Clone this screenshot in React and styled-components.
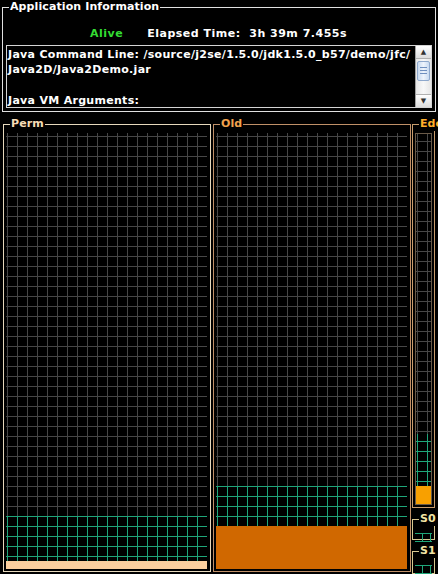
import React from "react";
import styled, { createGlobalStyle } from "styled-components";

const GlobalStyle = createGlobalStyle`
  html, body {
    margin: 0;
    padding: 0;
    background: #000;
  }
  body {
    font-family: "DejaVu Sans", "Liberation Sans", sans-serif;
    font-size: 11px;
    font-weight: bold;
    color: #fff;
  }
`;

const gridLines = (color) => `
  background-image:
    linear-gradient(to right, ${color} 1px, transparent 1px),
    linear-gradient(to top, transparent 2px, ${color} 2px, ${color} 3px, transparent 3px);
  background-size: 10px 10px;
  background-position: 1px 0, 0 100%;
`;

const Page = styled.div`
  width: 438px;
  height: 574px;
  overflow: hidden;
  display: flex;
  flex-direction: column;
  background: #000;
`;

const Group = styled.fieldset`
  box-sizing: border-box;
  margin: 0;
  padding: 0;
  min-width: 0;
  border: 1px solid ${(p) => p.$line};
  display: flex;
  flex-direction: column;
`;

const Legend = styled.legend`
  margin-left: 4px;
  padding: 0 1px;
  line-height: 14px;
  font-size: 11px;
  letter-spacing: 0.1px;
  white-space: nowrap;
  color: ${(p) => p.$color};
`;

const InfoGroup = styled(Group)`
  width: 434px;
  margin: 0 2px;
  padding: 0 3px 3px 2px;
`;

const StatusRow = styled.div`
  display: flex;
  justify-content: center;
  gap: 24px;
  padding: 13px 0 4px 0;
  line-height: 14px;
  letter-spacing: 0.5px;
`;

const Alive = styled.span`
  color: #33dd33;
`;

const Elapsed = styled.span`
  white-space: pre;
`;

const TextArea = styled.div`
  box-sizing: border-box;
  height: 63px;
  margin-left: 1px;
  border: 1px solid #d4d4d4;
  display: flex;
`;

const TextBody = styled.div`
  flex: 1;
  padding: 1px 1px;
  line-height: 15.3px;
  font-size: 11px;
  letter-spacing: 0.3px;
  white-space: pre;
  overflow: hidden;
`;

const ScrollBar = styled.div`
  width: 15px;
  display: flex;
  flex-direction: column;
  background: linear-gradient(to right, #e6e6e6, #f8f8f8 50%, #e6e6e6);
  border-left: 1px solid #a0a0a0;
`;

const ArrowBtn = styled.div`
  height: 12px;
  display: flex;
  align-items: center;
  justify-content: center;
  font-size: 7px;
  color: #333;
  background: linear-gradient(to bottom, #ffffff, #dcdcdc);
  border-${(p) => (p.$down ? "top" : "bottom")}: 1px solid #b0b0b0;
`;

const Thumb = styled.div`
  height: 18px;
  margin: 2px 1px 0;
  border: 1px solid #8ea8cc;
  border-radius: 2px;
  background:
    linear-gradient(#6f8fbf, #6f8fbf) center 5px / 7px 1px no-repeat,
    linear-gradient(#6f8fbf, #6f8fbf) center 8px / 7px 1px no-repeat,
    linear-gradient(#6f8fbf, #6f8fbf) center 11px / 7px 1px no-repeat,
    linear-gradient(to right, #c8daf0, #eef4fc 50%, #c8daf0);
`;

const Track = styled.div`
  flex: 1;
`;

const Pools = styled.div`
  flex: 1;
  display: flex;
  margin-top: 5px;
  min-height: 0;
`;

const PoolGroup = styled(Group)`
  width: ${(p) => p.$w}px;
  margin: 0 0 2px ${(p) => p.$ml}px;
  padding: 2px 3px 2px 2px;
`;

const SideColumn = styled.div`
  display: flex;
  flex-direction: column;
  gap: 4px;
  margin-left: 1px;
`;

const SmallGroup = styled(Group)`
  width: 23px;
  height: ${(p) => p.$h}px;
  padding: 2px 2px 2px 2px;
  flex: ${(p) => (p.$grow ? 1 : "none")};
`;

const Chart = styled.div`
  flex: 1;
  display: flex;
  flex-direction: column;
  justify-content: flex-end;
  background-color: #000;
  ${gridLines("#474747")}
  border: ${(p) => (p.$boxed ? "1px solid #6a5a48" : "none")};
`;

const Committed = styled.div`
  display: flex;
  flex-direction: column;
  justify-content: flex-end;
  ${gridLines("#1fa67a")}
`;

const Used = styled.div`
  background: ${(p) => p.$color};
`;

const MiniChart = styled.div`
  margin-top: 5px;
  height: 7px;
  border-top: 1px solid #1fa67a;
  border-bottom: 1px solid #1fa67a;
  background-image: linear-gradient(to right, #1fa67a 1px, transparent 1px);
  background-size: 8px 100%;
  background-position: 7px 0;
`;

const MemoryChart = ({ committed, used, color, boxed }) => (
  <Chart $boxed={boxed}>
    <Committed style={{ height: committed }}>
      <Used $color={color} style={{ height: used }} />
    </Committed>
  </Chart>
);

const App = () => {
  return (
    <Page>
      <GlobalStyle />
      <InfoGroup $line="#e0e0e0">
        <Legend $color="#ffffff">Application Information</Legend>
        <StatusRow>
          <Alive>Alive</Alive>
          <Elapsed>Elapsed Time:  3h 39m 7.455s</Elapsed>
        </StatusRow>
        <TextArea>
          <TextBody>
            {"Java Command Line: /source/j2se/1.5.0/jdk1.5.0_b57/demo/jfc/\nJava2D/Java2Demo.jar\n\nJava VM Arguments:"}
          </TextBody>
          <ScrollBar>
            <ArrowBtn>▲</ArrowBtn>
            <Thumb />
            <Track />
            <ArrowBtn $down>▼</ArrowBtn>
          </ScrollBar>
        </TextArea>
      </InfoGroup>

      <Pools>
        <PoolGroup $w={208} $ml={3} $line="#e6d8bc">
          <Legend $color="#f6dcb6">Perm</Legend>
          <MemoryChart committed={53} used={8} color="#fbcf9e" />
        </PoolGroup>
        <PoolGroup $w={198} $ml={2} $line="#c09068">
          <Legend $color="#f0a24e">Old</Legend>
          <MemoryChart committed={83} used={43} color="#d06800" />
        </PoolGroup>
        <SideColumn>
          <SmallGroup $grow $line="#c89c6c">
            <Legend $color="#ffae2a">Eden</Legend>
            <MemoryChart committed={70} used={18} color="#f8a000" boxed />
          </SmallGroup>
          <SmallGroup $h={28} $line="#d8c890">
            <Legend $color="#f2e4a4">S0</Legend>
            <MiniChart />
          </SmallGroup>
          <SmallGroup $h={30} $line="#d8c890">
            <Legend $color="#f2e4a4">S1</Legend>
            <MiniChart />
          </SmallGroup>
        </SideColumn>
      </Pools>
    </Page>
  );
};

export default App;
